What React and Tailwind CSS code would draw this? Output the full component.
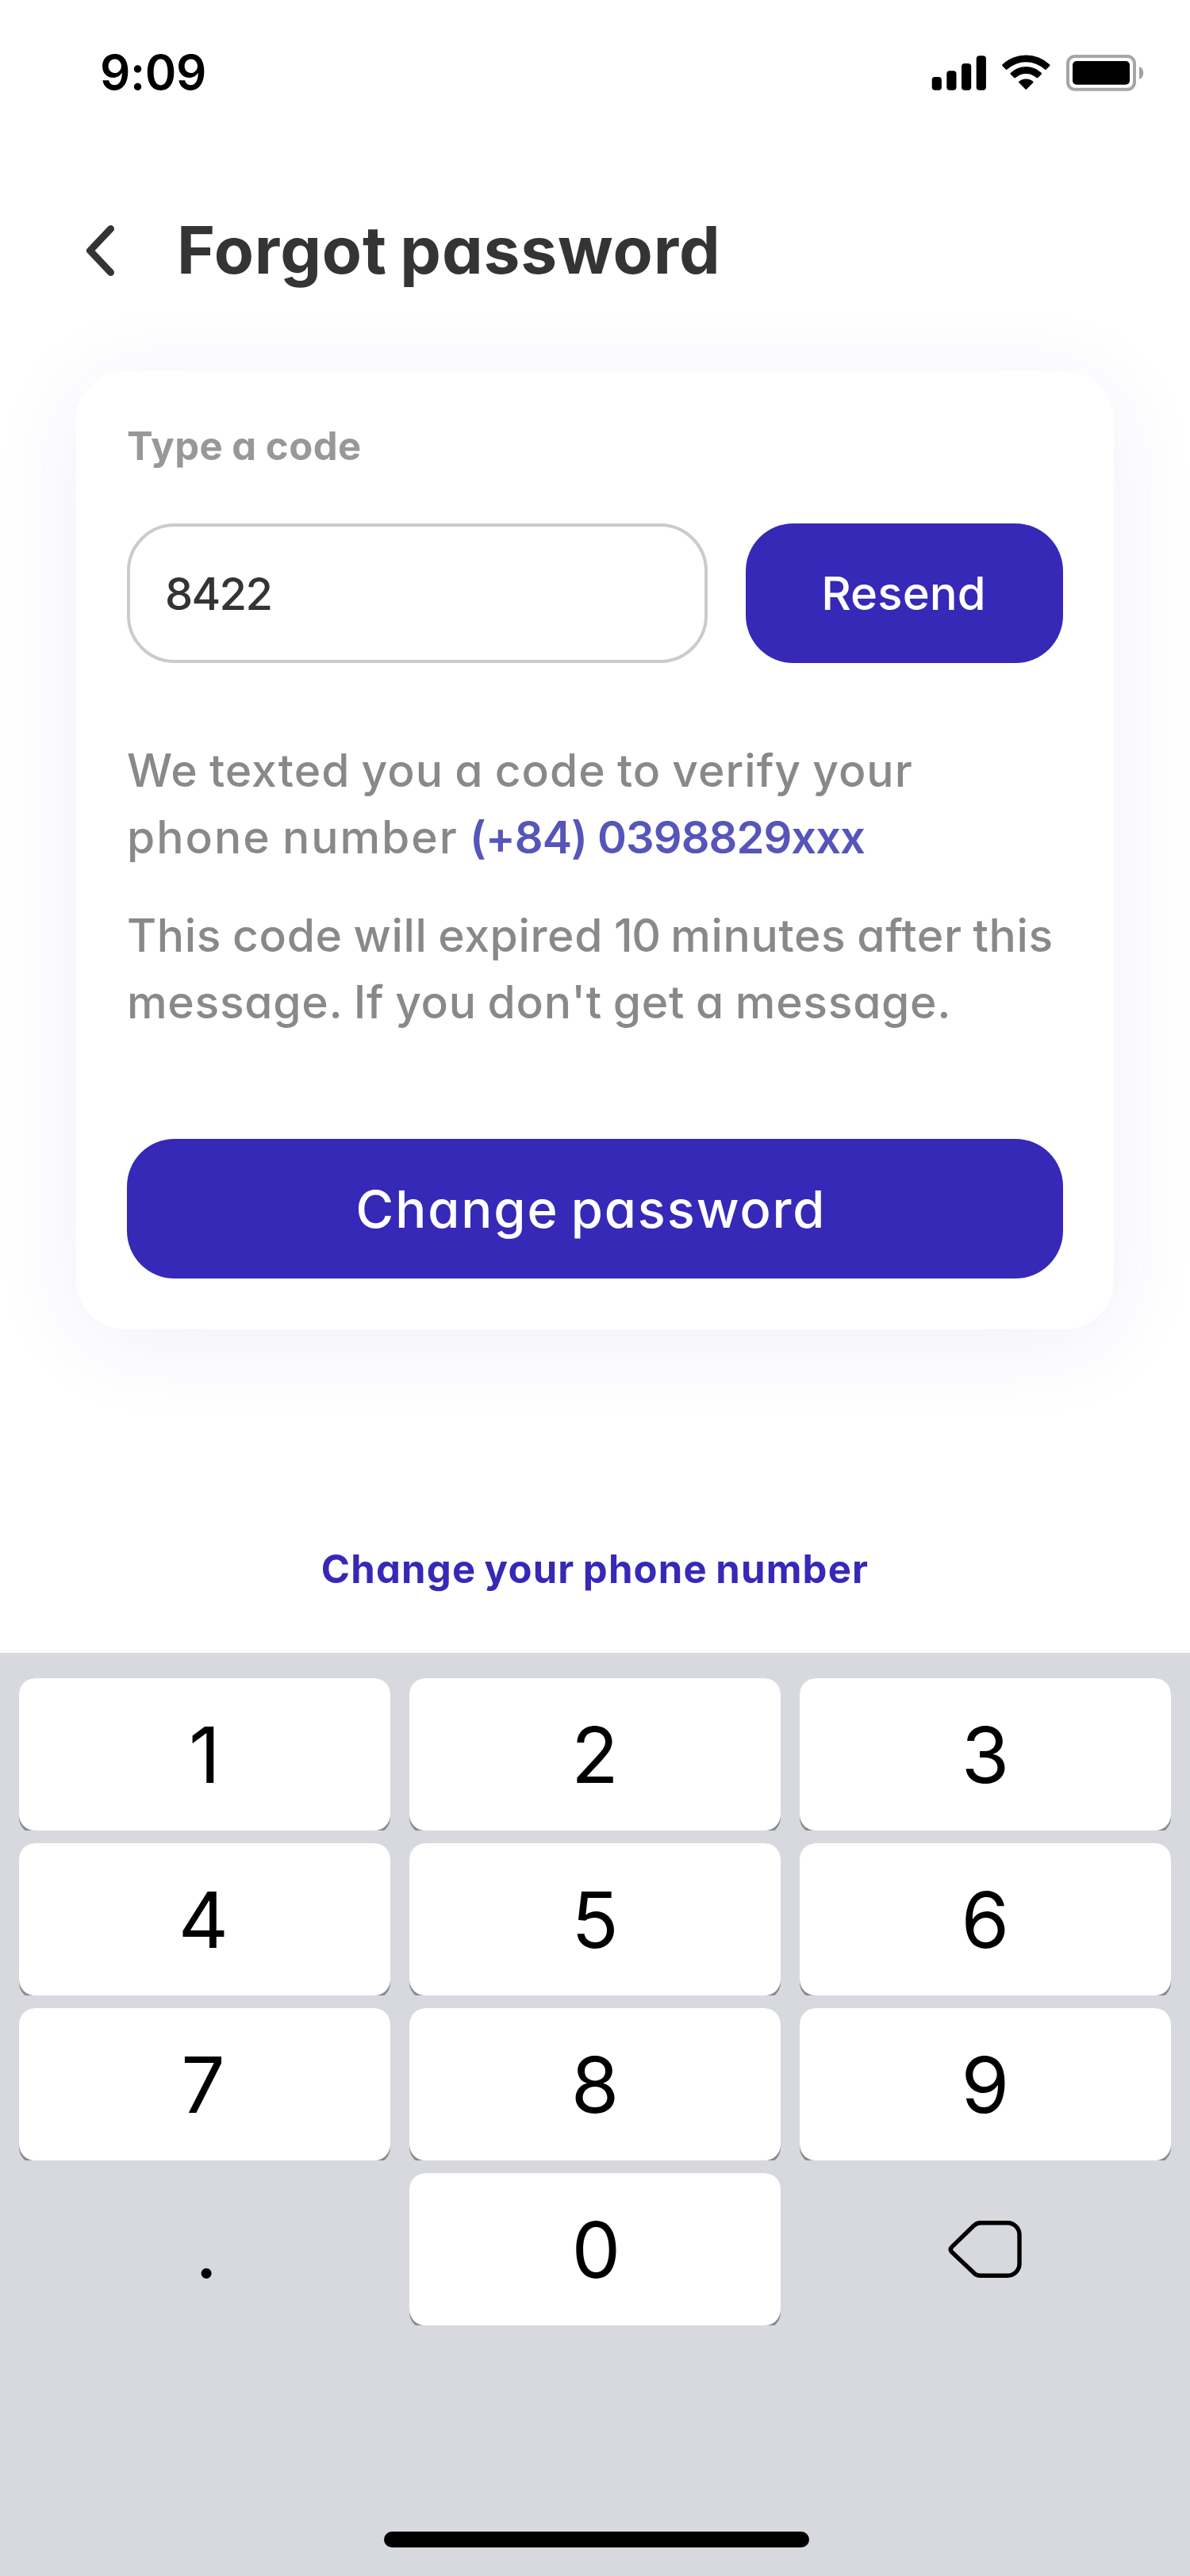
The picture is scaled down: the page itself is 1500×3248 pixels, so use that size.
const keys = ["1", "2", "3", "4", "5", "6", "7", "8", "9"];

const nudges = { 4: "pr-[3px]", 7: "pr-[4px]", 0: "pl-[3px]" };

function StatusIcons() {
  return (
    <svg className="mt-[68px] h-12 w-[268px]" viewBox="1174 68 268 48" fill="#000">
      <rect x="1174.7" y="97" width="12.2" height="16.7" rx="4" />
      <rect x="1193.3" y="89.3" width="12.2" height="24.4" rx="4" />
      <rect x="1212" y="80" width="12.2" height="33.7" rx="4" />
      <rect x="1230.7" y="70.3" width="12.2" height="43.4" rx="4" />
      <path d="M1263.6 81.3a43 43 0 0 1 59.4 0q1 1 0 2l-4.2 4.3q-.8.8-1.8 0a34.6 34.6 0 0 0-47.4 0q-1 .8-1.8 0l-4.2-4.3q-1-1 0-2z" />
      <path d="M1274 91.8a28 28 0 0 1 38.6 0q1 1 0 2l-4.3 4.3q-.8.8-1.8 0a19.5 19.5 0 0 0-26.4 0q-1 .8-1.8 0l-4.3-4.3q-1-1 0-2z" />
      <path d="M1284.6 102.6a13.4 13.4 0 0 1 17.4 0q1.1.9 0 2l-7.7 7.7q-1 1-2 0l-7.7-7.7q-1.1-1.1 0-2z" />
      <rect x="1346" y="71" width="84" height="41.7" rx="9" fill="none" stroke="#a6a6a6" strokeWidth="4" />
      <rect x="1352" y="77" width="72" height="29.7" rx="5" />
      <path d="M1436 84v16a8.7 8.7 0 0 0 0-16z" fill="#a0a0a0" />
    </svg>
  );
}

function Key({ label }) {
  return (
    <div className="h-[192px] overflow-hidden rounded-t-[20px]">
      <button className="flex size-full items-center justify-center rounded-[20px] bg-white pt-[2px] text-[98px] leading-none text-black shadow-[0_4px_0_#898a8d]">
        <span className={nudges[label]}>{label}</span>
      </button>
    </div>
  );
}

export default function App() {
  return (
    <div className="flex h-[3248px] w-[1500px] flex-col overflow-hidden bg-white font-['Inter',sans-serif] [font-feature-settings:'cv11']">
      <header className="flex h-[256px] shrink-0 items-start justify-between pr-[58px] pl-[126px]">
        <div className="pt-[61px] text-[60px] leading-[60px] font-semibold tracking-[-0.4px]">9:09</div>
        <StatusIcons />
      </header>

      <div className="flex h-[120px] shrink-0 items-center pl-[104px] text-[#343434]">
        <svg className="h-[72px] w-[48px]" viewBox="104 280 48 72" fill="none" stroke="currentColor" strokeWidth="9" strokeLinecap="round" strokeLinejoin="round">
          <path d="M139.5 288.5 113.5 316l26 27.5" />
        </svg>
        <h1 className="ml-[71px] text-[82px] leading-[116px] font-[650] tracking-[0.9px] [word-spacing:-4px]">Forgot password</h1>
      </div>

      <main className="mx-[96px] mt-[92px] flex shrink-0 flex-col rounded-[62px] bg-white px-16 pt-[59px] pb-16 shadow-[0_16px_120px_rgba(54,41,183,0.07)]">
        <label className="text-[49px] leading-[72px] font-[650] tracking-[0.5px] text-[#989898] [word-spacing:-1px]">Type a code</label>
        <div className="mt-[61px] flex gap-12">
          <div className="flex h-[176px] w-[732px] items-center rounded-[60px] border-4 border-[#cbcbcb] pt-px pl-[44px] text-[56px] font-medium tracking-[-1.7px] text-[#343434]">8422</div>
          <button className="flex h-[176px] w-[400px] items-center justify-center rounded-[60px] bg-[#3629b7] pt-px pr-[2px] text-[58px] font-medium tracking-[0.1px] text-white">Resend</button>
        </div>
        <p className="mt-[94px] text-[57px] leading-[84px] font-medium whitespace-nowrap text-[#898989]">
          <span className="tracking-[1px] [word-spacing:-2px]">We texted you a code to verify your</span>
          <br />
          <span className="tracking-[2px] [word-spacing:-3px]">phone number </span>
          <span className="text-[56px] font-semibold tracking-[-0.95px] text-[#5655b9]">(+84) 0398829xxx</span>
        </p>
        <p className="mt-[40px] text-[57px] leading-[84px] font-medium whitespace-nowrap text-[#898989]">
          <span className="tracking-[0.65px] [word-spacing:-2px]">
            This code will expired <span className="tracking-[-1.5px]">10</span> minutes after this
          </span>
          <br />
          <span className="tracking-[0.7px] [word-spacing:-2px]">message. If you don't get a message.</span>
        </p>
        <button className="mt-[130px] flex h-[176px] items-center justify-center rounded-[60px] bg-[#3629b7] pt-px pr-[10px] text-[65px] font-medium tracking-[1.9px] text-white [word-spacing:-4px]">
          Change password
        </button>
      </main>

      <a className="mt-[267px] shrink-0 text-center text-[49px] leading-[72px] font-[650] tracking-[1.2px] text-[#3629b7] [word-spacing:-2.5px]">Change your phone number</a>

      <section className="mt-[69px] flex flex-1 flex-col items-center justify-between bg-[#d8d9de] px-6 pt-8 pb-9">
        <div className="grid w-full grid-cols-3 gap-x-6 gap-y-4">
          {keys.map((k) => (
            <Key key={k} label={k} />
          ))}
          <button className="flex h-[192px] items-center justify-center pt-[2px] pl-1 text-[98px] leading-none">.</button>
          <Key label="0" />
          <button className="flex h-[192px] items-center justify-center">
            <svg className="h-[76px] w-[96px]" viewBox="1194 2798 96 76" fill="none" stroke="#000" strokeWidth="5.4" strokeLinejoin="round">
              <path d="M1236 2802.7h34a15 15 0 0 1 15 15v36.6a15 15 0 0 1-15 15h-34q-5 0-8.5-3.5l-27.5-26q-3.5-3.5 0-7l27.5-26.5q3.5-3.6 8.5-3.6z" />
            </svg>
          </button>
        </div>
        <div className="ml-1 h-5 w-[536px] rounded-[10px] bg-black" />
      </section>
    </div>
  );
}
